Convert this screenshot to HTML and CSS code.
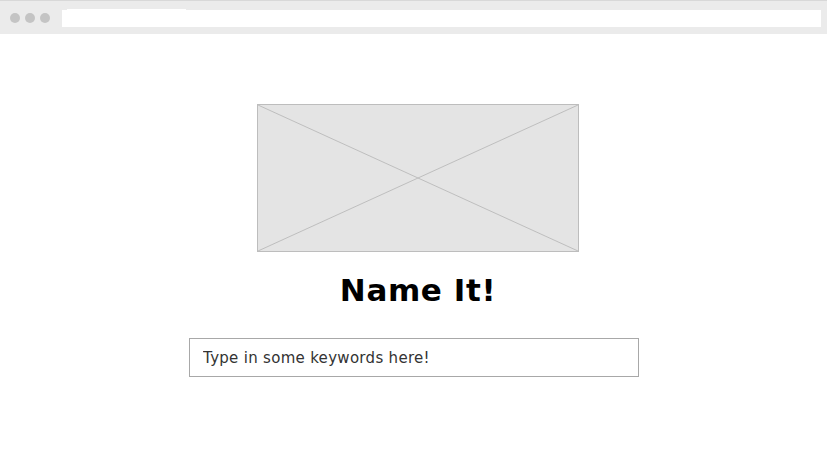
FILE: index.html
```html
<!DOCTYPE html>
<html>
<head>
<meta charset="utf-8">
<link rel="stylesheet" href="styles.css">
</head>
<body>
<div class="browser-bar">
  <div class="dots"><span class="dot"></span><span class="dot"></span><span class="dot"></span></div>
  <div class="address"><div class="tab"></div></div>
</div>
<main class="content">
  <div class="placeholder">
    <svg viewBox="0 0 321 147" preserveAspectRatio="none" width="321" height="147">
      <line x1="0" y1="0" x2="321" y2="147" stroke="#bdbdbd" stroke-width="1"/>
      <line x1="321" y1="0" x2="0" y2="147" stroke="#bdbdbd" stroke-width="1"/>
    </svg>
  </div>
  <h1 class="title">Name It!</h1>
  <input class="search" type="text" placeholder="Type in some keywords here!">
</main>
</body>
</html>
```

FILE: styles.css
```css
* { box-sizing: border-box; }
html, body { margin: 0; padding: 0; background: #fff; }
body { font-family: "DejaVu Sans", "Open Sans", sans-serif; width: 827px; height: 465px; overflow: hidden; }

.browser-bar {
  height: 34px;
  background: #ebebeb;
  border-top: 1px solid #d8d8d8;
  display: flex;
  align-items: center;
  padding: 0 6px 0 10px;
}
.dots { display: flex; gap: 5px; width: 52px; }
.dot { width: 10px; height: 10px; border-radius: 50%; background: #c4c4c4; }
.address {
  flex: 1;
  height: 17px;
  background: #fff;
  margin-top: 1px;
  position: relative;
}
.tab {
  position: absolute;
  left: 5px; top: -1px;
  width: 119px; height: 1px;
  background: #fff;
}

.content {
  display: flex;
  flex-direction: column;
  align-items: center;
  padding-top: 70px;
}
.placeholder {
  width: 322px;
  height: 148px;
  margin-left: 8px;
  background: #e4e4e4;
  border: 1px solid #bdbdbd;
  overflow: hidden;
  display: flex;
}
.placeholder svg { display: block; width: 100%; height: 100%; }

.title {
  margin: 18px 0 0 9px;
  font-size: 31px;
  font-weight: bold;
  line-height: 40px;
  color: #000;
  letter-spacing: 0.6px;
}

.search {
  margin: 28px 0 0 1px;
  width: 450px;
  height: 39px;
  border: 1px solid #a8a8a8;
  padding: 0 13px;
  font-family: "DejaVu Sans", sans-serif;
  font-size: 15px;
  letter-spacing: 0.3px;
  color: #333;
  outline: none;
}
.search::placeholder { color: #333; opacity: 1; }
```
